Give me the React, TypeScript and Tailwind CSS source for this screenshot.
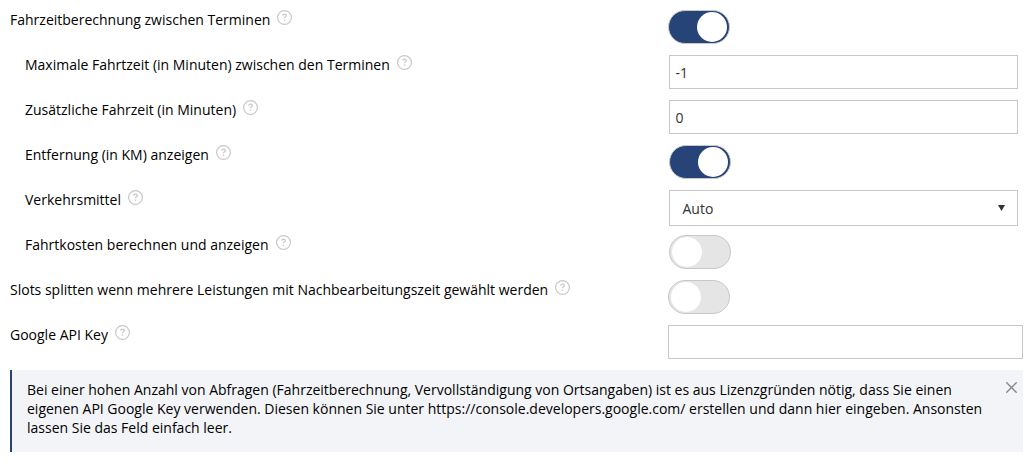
import { useId, useState } from "react";
import type { ReactNode } from "react";

function HelpButton({ topic }: { topic: string }) {
  return (
    <button type="button" aria-label={`Hilfe: ${topic}`} className="shrink-0 text-[#c8c8c8]">
      <svg width="15" height="15" viewBox="0 0 15 15" fill="none" stroke="currentColor" className="block">
        <circle cx="7.5" cy="7.5" r="6.9" strokeWidth="1.2" />
        <path d="M5.7 5.6c.1-1 .8-1.5 1.8-1.5s1.8.5 1.8 1.4c0 1.3-1.8 1.3-1.8 2.8" strokeWidth="1.3" />
        <path d="M6.8 10.2h1.4" strokeWidth="1.4" />
      </svg>
    </button>
  );
}

type RowProps = {
  label: string;
  nested?: boolean;
  children: (id: string) => ReactNode;
};

function Row({ label, nested = false, children }: RowProps) {
  const id = useId();
  return (
    <div className="grid h-[45px] grid-cols-[minmax(0,1fr)_35%] items-start">
      <div className={nested ? "flex items-start gap-[7px] pl-[15px]" : "flex items-start gap-[7px]"}>
        <label htmlFor={id}>{label}</label>
        <HelpButton topic={label} />
      </div>
      <div className={nested ? "pr-[5px] pl-px" : ""}>{children(id)}</div>
    </div>
  );
}

function Toggle({ id, defaultChecked = false }: { id: string; defaultChecked?: boolean }) {
  return (
    <input
      id={id}
      type="checkbox"
      role="switch"
      defaultChecked={defaultChecked}
      className="flex h-[34px] w-[62px] cursor-pointer appearance-none items-center rounded-full border border-[#c8c8c8] bg-[#e5e5e5] px-0.5 before:size-[30px] before:rounded-full before:bg-white before:content-[''] checked:justify-end checked:bg-[#274478]"
    />
  );
}

function TextField({ id, defaultValue = "" }: { id: string; defaultValue?: string }) {
  return (
    <input
      id={id}
      type="text"
      defaultValue={defaultValue}
      className="block h-[34px] w-full border border-[#c8c8c8] bg-white px-[5px] text-[#333]"
    />
  );
}

function SelectField({ id }: { id: string }) {
  return (
    <div className="relative">
      <select
        id={id}
        className="block h-9 w-full appearance-none border border-[#c8c8c8] bg-white pr-8 pl-3 text-[#333]"
      >
        <option>Auto</option>
        <option>Fahrrad</option>
        <option>Zu Fuß</option>
      </select>
      <svg
        width="7"
        height="6"
        viewBox="0 0 7 6"
        className="pointer-events-none absolute top-[15px] right-[13px] fill-[#333]"
      >
        <path d="M0 0h7L3.5 6z" />
      </svg>
    </div>
  );
}

function Notice() {
  const [open, setOpen] = useState(true);
  if (!open) return null;
  return (
    <div role="note" className="relative border-l-2 border-[#274478] bg-[#f3f4f8] pt-2.5 pr-9 pb-[15px] pl-[15px]">
      <p>
        Bei einer hohen Anzahl von Abfragen (Fahrzeitberechnung, Vervollständigung von Ortsangaben) ist es aus
        Lizenzgründen nötig, dass Sie einen eigenen API Google Key verwenden. Diesen können Sie unter
        https://console.developers.google.com/ erstellen und dann hier eingeben. Ansonsten lassen Sie das Feld
        einfach leer.
      </p>
      <button
        type="button"
        aria-label="Schließen"
        onClick={() => setOpen(false)}
        className="absolute top-3 right-1.5 text-[#888]"
      >
        <svg width="11" height="11" viewBox="0 0 11 11" stroke="currentColor" strokeWidth="1.4" className="block">
          <path d="M.3.3l10.4 10.4M10.7.3L.3 10.7" />
        </svg>
      </button>
    </div>
  );
}

export default function App() {
  return (
    <main className="bg-white pt-2.5 pr-1 pb-2.5 pl-2.5 font-['Open_Sans',sans-serif] text-[14px] leading-[19px] text-black">
      <Row label="Fahrzeitberechnung zwischen Terminen">{(id) => <Toggle id={id} defaultChecked />}</Row>
      <Row nested label="Maximale Fahrtzeit (in Minuten) zwischen den Terminen">
        {(id) => <TextField id={id} defaultValue="-1" />}
      </Row>
      <Row nested label="Zusätzliche Fahrzeit (in Minuten)">
        {(id) => <TextField id={id} defaultValue="0" />}
      </Row>
      <Row nested label="Entfernung (in KM) anzeigen">
        {(id) => <Toggle id={id} defaultChecked />}
      </Row>
      <Row nested label="Verkehrsmittel">
        {(id) => <SelectField id={id} />}
      </Row>
      <Row nested label="Fahrtkosten berechnen und anzeigen">
        {(id) => <Toggle id={id} />}
      </Row>
      <Row label="Slots splitten wenn mehrere Leistungen mit Nachbearbeitungszeit gewählt werden">
        {(id) => <Toggle id={id} />}
      </Row>
      <Row label="Google API Key">{(id) => <TextField id={id} />}</Row>
      <Notice />
    </main>
  );
}
